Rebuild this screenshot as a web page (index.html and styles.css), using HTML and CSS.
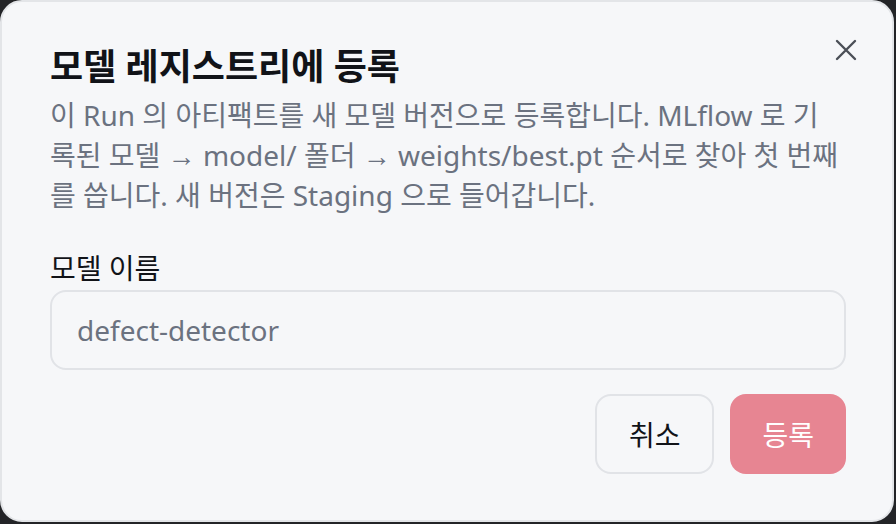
FILE: index.html
```html
<!DOCTYPE html>
<html lang="ko">
<head>
  <meta charset="UTF-8">
  <meta name="viewport" content="width=device-width, initial-scale=1.0">
  <title>모델 레지스트리에 등록</title>
  <link rel="stylesheet" href="styles.css">
</head>
<body>
  <div class="dialog">
    <button class="close" aria-label="닫기">
      <svg width="22" height="22" viewBox="0 0 22 22"><path d="M2 2L20 20M20 2L2 20" stroke="#4b4f57" stroke-width="2.4" stroke-linecap="round"/></svg>
    </button>

    <div class="header">
      <h2 class="title">모델 레지스트리에 등록</h2>
      <p class="desc">이 Run 의 아티팩트를 새 모델 버전으로 등록합니다. MLflow 로 기록된 모델 → model/ 폴더 → weights/best.pt 순서로 찾아 첫 번째를 씁니다. 새 버전은 Staging 으로 들어갑니다.</p>
    </div>

    <label class="field">
      <span class="label">모델 이름</span>
      <input type="text" class="input" placeholder="defect-detector">
    </label>

    <div class="actions">
      <button class="btn btn-cancel">취소</button>
      <button class="btn btn-primary" disabled>등록</button>
    </div>
  </div>
</body>
</html>
```

FILE: styles.css
```css
html, body { margin: 0; height: 100%; }
body { background: #232427; font-family: "Noto Sans", "Liberation Sans", "Noto Sans CJK KR", sans-serif; }
.dialog {
  position: relative;
  box-sizing: border-box;
  width: 894px;
  height: 522px;
  background: #f6f7f9;
  border: 2px solid #e3e5e8;
  border-radius: 22px;
  padding: 41px 46px 48px 48px;
  display: flex;
  flex-direction: column;
}
.close {
  position: absolute;
  top: 28px;
  right: 26px;
  width: 40px;
  height: 40px;
  border: 0;
  background: none;
  padding: 0;
  display: flex;
  align-items: center;
  justify-content: center;
}
.header { padding-right: 4px; }
.title { margin: 0; font-size: 36px; line-height: 48px; font-weight: 700; color: #111318; }
.desc { margin: 4px 0 0; font-size: 28px; line-height: 40px; color: #6b7280; }
.field { display: flex; flex-direction: column; margin-top: 33px; }
.label { font-size: 28px; line-height: 40px; color: #111318; margin-bottom: 2px; }
.input {
  box-sizing: border-box;
  height: 80px;
  border: 2px solid #e1e3e7;
  border-radius: 16px;
  background: #f6f7f9;
  padding: 0 25px;
  font: inherit;
  font-size: 28px;
  color: #111318;
  outline: none;
}
.input::placeholder { color: #6b7280; }
.actions { display: flex; justify-content: flex-end; gap: 16px; margin-top: 24px; }
.btn {
  height: 80px;
  padding: 0 32px;
  border-radius: 16px;
  font: inherit;
  font-size: 28px;
}
.btn-cancel { background: #f6f7f9; border: 2px solid #e1e3e7; color: #111318; }
.btn-primary { background: #e78592; border: 0; color: #fff; }
```
